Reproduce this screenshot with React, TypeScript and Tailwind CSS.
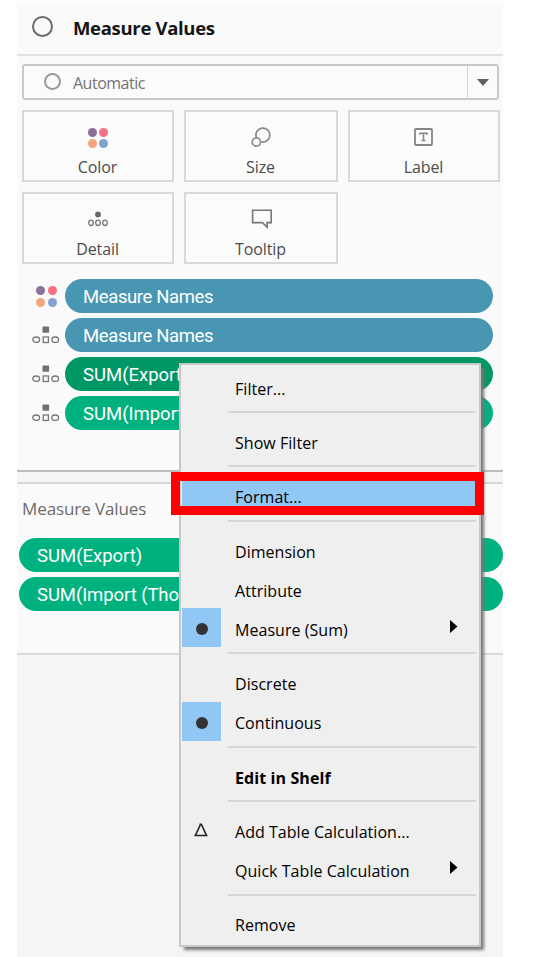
import React from "react";

const dotColors = ["#8a719b", "#f57082", "#f2a67c", "#82a3cb"];

function ColorDots({ className, r, gap }: { className: string; r: number; gap: number }) {
  const size = r * 2 + gap;
  return (
    <svg className={className} width={size} height={size} viewBox={`0 0 ${size} ${size}`}>
      {dotColors.map((c, i) => (
        <circle key={c} cx={r + (i % 2) * gap} cy={r + Math.floor(i / 2) * gap} r={r} fill={c} />
      ))}
    </svg>
  );
}

function DetailMark() {
  return (
    <svg width="28" height="18" viewBox="0 0 28 18" fill="none" stroke="#777" strokeWidth="1.3">
      <rect x="10.5" y="0.5" width="6.6" height="6.2" rx="0.6" fill="#707070" stroke="none" />
      <ellipse cx="4.2" cy="13.7" rx="3.4" ry="2.7" />
      <rect x="11.2" y="11" width="5.2" height="5.5" />
      <ellipse cx="23.2" cy="13.7" rx="3.4" ry="2.7" />
    </svg>
  );
}

const SizeIcon = () => (
  <svg className="mt-[2px] ml-px" width="24" height="24" viewBox="0 0 24 24" fill="none" stroke="#8c8c8c" strokeWidth="1.8">
    <path d="M6.2 12.2A7 7 0 1 1 11.4 16.9" />
    <circle cx="6.4" cy="17" r="4.2" />
  </svg>
);

const LabelIcon = () => (
  <svg className="mr-[2px] mt-px" width="19" height="18" viewBox="0 0 19 18" fill="none" stroke="#858585">
    <rect x="1" y="1" width="17" height="16" rx="1" strokeWidth="1.8" />
    <path d="M6 6.8V5.2h7v1.6M9.5 5.2v7M7.5 12.4h4" strokeWidth="1.5" />
  </svg>
);

const DetailIcon = () => (
  <svg className="mt-px" width="20" height="16" viewBox="0 0 20 16" fill="none" stroke="#777" strokeWidth="1.3">
    <circle cx="10" cy="3.4" r="2.9" fill="#666" stroke="none" />
    <ellipse cx="3" cy="11.8" rx="2.3" ry="2.7" />
    <ellipse cx="10" cy="11.8" rx="2.3" ry="2.7" />
    <ellipse cx="17" cy="11.8" rx="2.3" ry="2.7" />
  </svg>
);

const TooltipIcon = () => (
  <svg className="mt-px ml-px" width="22" height="20" viewBox="0 0 22 20" fill="none" stroke="#777" strokeWidth="1.6">
    <path d="M1.6 1.2h18.6v12.4h-4.1v4.6l-4.7-4.6H1.6z" />
  </svg>
);

function Card({ label, children }: { label: string; children: React.ReactNode }) {
  return (
    <div className="flex h-[72px] flex-col items-center border-2 border-[#d8d8d8] bg-[#fbfbfb]">
      <div className="flex h-[48px] w-full items-center justify-center">{children}</div>
      <span className="-mt-[3px] mr-px text-[16px] leading-[20px] tracking-[-0.1px] text-[#4c4c4c]">{label}</span>
    </div>
  );
}

function Pill({ text, className }: { text: string; className: string }) {
  return (
    <div className={`flex h-[34px] items-center overflow-hidden rounded-full pt-[3px] pl-[18px] whitespace-nowrap text-white ${className}`}>
      {text}
    </div>
  );
}

type Item = { label: string; sep?: boolean; mark?: "dot" | "delta"; arrow?: boolean; active?: boolean; bold?: boolean };

const items: Item[] = [
  { label: "Filter...", sep: true },
  { label: "Show Filter", sep: true },
  { label: "Format...", sep: true, active: true },
  { label: "Dimension" },
  { label: "Attribute" },
  { label: "Measure (Sum)", mark: "dot", arrow: true, sep: true },
  { label: "Discrete" },
  { label: "Continuous", mark: "dot", sep: true },
  { label: "Edit in Shelf", bold: true, sep: true },
  { label: "Add Table Calculation...", mark: "delta" },
  { label: "Quick Table Calculation", arrow: true, sep: true },
  { label: "Remove" },
];

function MenuRow({ item }: { item: Item }) {
  return (
    <>
      <div className={`flex h-[39px] shrink-0 items-center ${item.active ? "bg-[#91c7f5]" : ""}`}>
        <div className={`flex h-[39px] w-[39px] items-center justify-center ${item.mark === "dot" ? "bg-[#91c7f5]" : ""}`}>
          {item.mark === "dot" && <span className="mt-[3px] h-[12px] w-[12px] rounded-full bg-[#333]" />}
          {item.mark === "delta" && (
            <svg width="14" height="14" viewBox="0 0 14 14" className="mr-[2px]" fill="none" stroke="#222" strokeWidth="1.5">
              <path d="M5.5 1.2h2.4M6.4 1.6L1.3 12.6H12.6L7.5 1.6" />
            </svg>
          )}
        </div>
        <span className={`mt-[4px] ml-[14px] flex-1 whitespace-nowrap ${item.bold ? "font-bold tracking-[0.1px]" : "tracking-[0.04px]"}`}>{item.label}</span>
        {item.arrow && (
          <svg width="8" height="13" viewBox="0 0 8 13" className="mr-[18px] mb-[3px]">
            <path d="M0 0L7.5 6.5L0 13Z" fill="#000" />
          </svg>
        )}
      </div>
      {item.sep && (
        <div className="h-[15.43px] shrink-0 pt-[5px] pl-[46px]">
          <div className="h-[2px] bg-[#d6d6d6]" />
        </div>
      )}
    </>
  );
}

export default function App() {
  return (
    <div className="relative h-[957px] w-[540px] overflow-hidden bg-white pt-[3px] font-['Open_Sans','Noto_Sans',sans-serif]">
      <div className="ml-[17px] flex h-[954px] w-[486px] flex-col bg-[#f5f5f5]">
        <section className="flex h-[469px] flex-col border-b-2 border-[#bcbcbc] bg-[#fafafa]">
          <header className="flex h-[53px] shrink-0 items-center border-b-2 border-[#e1e1e1] pl-[15px]">
            <span className="mt-[-4px] h-[21px] w-[21px] rounded-full border-2 border-[#6b6b6b]" />
            <h1 className="mt-[-2px] ml-[20px] text-[18.5px] font-bold tracking-[-0.32px] whitespace-nowrap text-[#161616]">Measure Values</h1>
          </header>
          <div className="mt-[8px] ml-[5px] flex h-[36px] w-[477px] shrink-0 items-center rounded-[3px] border-2 border-[#c9c9c9] bg-[#fbfbfb]">
            <span className="mt-[-2px] ml-[20px] h-[17px] w-[17px] rounded-full border-2 border-[#999]" />
            <span className="mt-px ml-[12px] flex-1 text-[16px] tracking-[-0.5px] text-[#757575]">Automatic</span>
            <div className="flex h-full w-[30px] items-center justify-center border-l border-[#d5d5d5]">
              <svg width="12" height="7" viewBox="0 0 12 7"><path d="M0 0H12L6 7Z" fill="#606060" /></svg>
            </div>
          </div>
          <div className="mt-[10px] ml-[5px] grid w-[478px] grid-cols-[152px_154px_152px] gap-[10px]">
            <Card label="Color"><ColorDots className="mt-[4px]" r={4.5} gap={11} /></Card>
            <Card label="Size"><SizeIcon /></Card>
            <Card label="Label"><LabelIcon /></Card>
            <Card label="Detail"><DetailIcon /></Card>
            <Card label="Tooltip"><TooltipIcon /></Card>
          </div>
          <div className="mt-[15px] flex flex-col gap-[5px] pl-[15px] font-[Roboto,sans-serif] text-[18.5px]">
            <div className="flex items-center">
              <div className="w-[33px]"><ColorDots className="ml-[4px]" r={4.5} gap={12} /></div>
              <Pill text="Measure Names" className="w-[428px] bg-[#4996b2] tracking-[-0.38px]" />
            </div>
            <div className="flex items-center">
              <div className="w-[33px]"><DetailMark /></div>
              <Pill text="Measure Names" className="w-[428px] bg-[#4996b2] tracking-[-0.38px]" />
            </div>
            <div className="flex items-center">
              <div className="w-[33px]"><DetailMark /></div>
              <Pill text="SUM(Export" className="w-[428px] bg-[#009767]" />
            </div>
            <div className="flex items-center">
              <div className="w-[33px]"><DetailMark /></div>
              <Pill text="SUM(Import" className="w-[428px] bg-[#00b180]" />
            </div>
          </div>
        </section>
        <section className="mt-[10px] flex h-[173px] flex-col border-y-2 border-[#d9d9d9] bg-[#fafafa]">
          <h2 className="mt-[13px] ml-[5px] h-[24px] text-[17px] leading-[24px] tracking-[-0.1px] text-[#6b6b6b]">Measure Values</h2>
          <div className="mt-[17px] ml-[2px] flex flex-col gap-[5px] font-[Roboto,sans-serif] text-[18.5px]">
            <Pill text="SUM(Export)" className="w-[484px] bg-[#00b180]" />
            <Pill text="SUM(Import (Tho" className="w-[484px] bg-[#00b180] tracking-[-0.08px]" />
          </div>
        </section>
      </div>

      <div className="absolute top-[363px] left-[179px] flex h-[584px] w-[302px] flex-col border-2 border-[#c8c8c8] bg-[#efefef] pt-[2px] pr-[3px] pl-px text-[16px] text-black shadow-[4px_4px_3px_-1px_#777]">
        {items.map((item) => <MenuRow key={item.label} item={item} />)}
      </div>
      <div className="absolute top-[472px] left-[171px] h-[43px] w-[313px] border-9 border-[#ff0000]" />
    </div>
  );
}
